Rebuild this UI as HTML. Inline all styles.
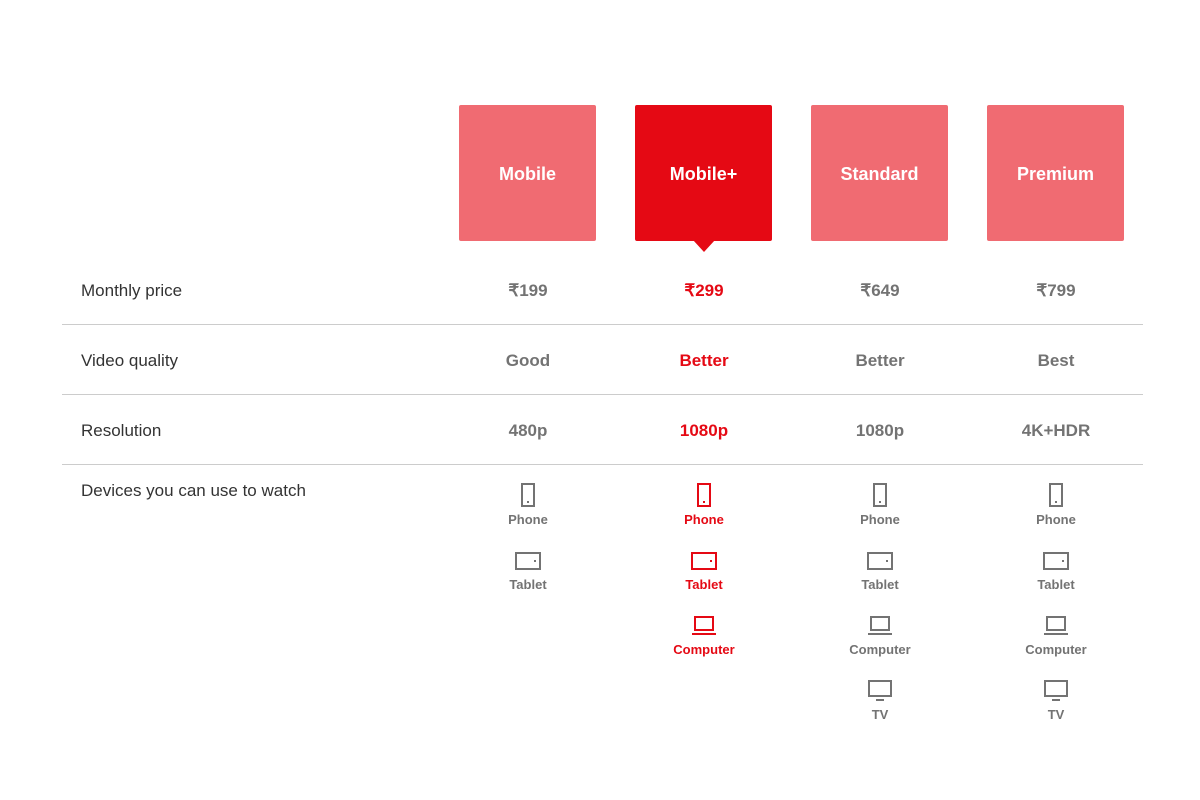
<!DOCTYPE html>
<html><head><style>
body{margin:0;width:1200px;height:800px;background:#fff;font-family:"Liberation Sans",sans-serif;position:relative;overflow:hidden}
.box{position:absolute;top:105px;width:137px;height:136px;background:#f06b72;border-radius:2px;color:#fff;font-weight:bold;font-size:18px;display:flex;align-items:center;justify-content:center;padding-top:2px;box-sizing:border-box}
.sel{background:#e50914}
.arrow{position:absolute;left:693px;top:240px;width:0;height:0;border-left:11px solid transparent;border-right:11px solid transparent;border-top:12px solid #e50914}
.lbl{position:absolute;left:81px;font-size:17px;color:#333}
.line{position:absolute;left:62px;width:1081px;height:1px;background:#ccc}
.c{position:absolute;width:160px;text-align:center;font-weight:bold;font-size:17px;color:#737373;transform:translateX(-80px)}
.dev{position:absolute;width:120px;text-align:center;transform:translateX(-60px);font-size:13px;font-weight:bold;color:#737373}
.dev svg{display:block;margin:0 auto 2px}
.c.r,.dev.r{color:#e50914}
</style></head><body>
<div class="box" style="left:459px">Mobile</div>
<div class="box sel" style="left:635px">Mobile+</div>
<div class="box" style="left:811px">Standard</div>
<div class="box" style="left:987px">Premium</div>
<div class="arrow"></div>

<div class="lbl" style="top:281px">Monthly price</div>
<div class="lbl" style="top:351px">Video quality</div>
<div class="lbl" style="top:421px">Resolution</div>
<div class="lbl" style="top:481px">Devices you can use to watch</div>
<div class="line" style="top:324px"></div>
<div class="line" style="top:394px"></div>
<div class="line" style="top:464px"></div>

<div class="c" style="left:528px;top:281px">₹199</div>
<div class="c r" style="left:704px;top:281px">₹299</div>
<div class="c" style="left:880px;top:281px">₹649</div>
<div class="c" style="left:1056px;top:281px">₹799</div>
<div class="c" style="left:528px;top:351px">Good</div>
<div class="c r" style="left:704px;top:351px">Better</div>
<div class="c" style="left:880px;top:351px">Better</div>
<div class="c" style="left:1056px;top:351px">Best</div>
<div class="c" style="left:528px;top:421px">480p</div>
<div class="c r" style="left:704px;top:421px">1080p</div>
<div class="c" style="left:880px;top:421px">1080p</div>
<div class="c" style="left:1056px;top:421px">4K+HDR</div>

<svg width="0" height="0" style="position:absolute">
<defs>
<symbol id="ph" viewBox="0 0 28 28"><rect x="8" y="2" width="12" height="22" fill="none" stroke="currentColor" stroke-width="2"/><rect x="13" y="19" width="2" height="2" fill="currentColor"/></symbol>
<symbol id="tb" viewBox="0 0 28 28"><rect x="2" y="6" width="24" height="16" fill="none" stroke="currentColor" stroke-width="2"/><rect x="20" y="13" width="2" height="2" fill="currentColor"/></symbol>
<symbol id="pc" viewBox="0 0 28 28"><rect x="5" y="5" width="18" height="13" fill="none" stroke="currentColor" stroke-width="2"/><rect x="2" y="21" width="24" height="2" fill="currentColor"/></symbol>
<symbol id="tv" viewBox="0 0 28 28"><rect x="3" y="4" width="22" height="15" fill="none" stroke="currentColor" stroke-width="2"/><rect x="10" y="22" width="8" height="2" fill="currentColor"/></symbol>
</defs></svg>

<div class="dev" style="left:528px;top:482px"><svg width="28" height="28"><use href="#ph"/></svg>Phone</div>
<div class="dev" style="left:528px;top:547px"><svg width="28" height="28"><use href="#tb"/></svg>Tablet</div>

<div class="dev r" style="left:704px;top:482px"><svg width="28" height="28"><use href="#ph"/></svg>Phone</div>
<div class="dev r" style="left:704px;top:547px"><svg width="28" height="28"><use href="#tb"/></svg>Tablet</div>
<div class="dev r" style="left:704px;top:612px"><svg width="28" height="28"><use href="#pc"/></svg>Computer</div>

<div class="dev" style="left:880px;top:482px"><svg width="28" height="28"><use href="#ph"/></svg>Phone</div>
<div class="dev" style="left:880px;top:547px"><svg width="28" height="28"><use href="#tb"/></svg>Tablet</div>
<div class="dev" style="left:880px;top:612px"><svg width="28" height="28"><use href="#pc"/></svg>Computer</div>
<div class="dev" style="left:880px;top:677px"><svg width="28" height="28"><use href="#tv"/></svg>TV</div>

<div class="dev" style="left:1056px;top:482px"><svg width="28" height="28"><use href="#ph"/></svg>Phone</div>
<div class="dev" style="left:1056px;top:547px"><svg width="28" height="28"><use href="#tb"/></svg>Tablet</div>
<div class="dev" style="left:1056px;top:612px"><svg width="28" height="28"><use href="#pc"/></svg>Computer</div>
<div class="dev" style="left:1056px;top:677px"><svg width="28" height="28"><use href="#tv"/></svg>TV</div>
</body></html>
